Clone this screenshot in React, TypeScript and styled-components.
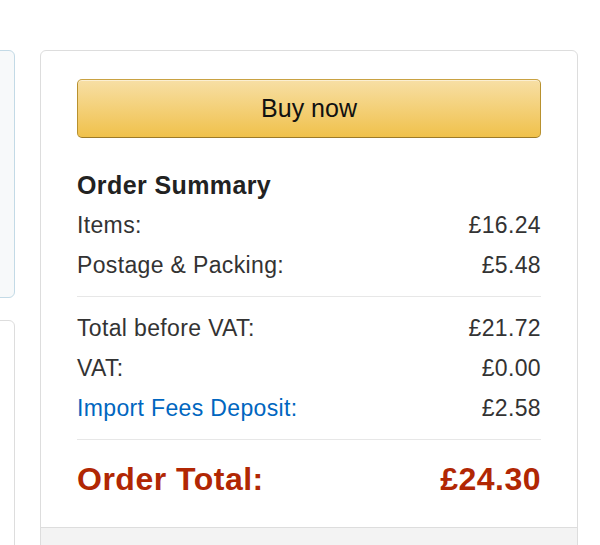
import styled, { createGlobalStyle } from "styled-components";

const GlobalStyle = createGlobalStyle`
  html, body {
    margin: 0;
    padding: 0;
    height: 100%;
    overflow: hidden;
    background: #ffffff;
    font-family: "Liberation Sans", Arial, sans-serif;
    color: #333333;
  }
`;

type Line = { label: string; value: string; link?: boolean };

const summary: Line[] = [
  { label: "Items:", value: "£16.24" },
  { label: "Postage & Packing:", value: "£5.48" },
];

const totals: Line[] = [
  { label: "Total before VAT:", value: "£21.72" },
  { label: "VAT:", value: "£0.00" },
  { label: "Import Fees Deposit:", value: "£2.58", link: true },
];

export default function App() {
  return (
    <>
      <GlobalStyle />
      <Page>
        <LeftColumn>
          <InfoCard />
          <PlainCard />
        </LeftColumn>
        <OrderCard>
          <Body>
            <BuyButton type="button">Buy now</BuyButton>
            <Heading>Order Summary</Heading>
            {summary.map((l) => (
              <Row key={l.label}>
                <Label $link={l.link}>{l.label}</Label>
                <Value>{l.value}</Value>
              </Row>
            ))}
            <Divider />
            {totals.map((l) => (
              <Row key={l.label}>
                <Label $link={l.link}>{l.label}</Label>
                <Value>{l.value}</Value>
              </Row>
            ))}
            <Divider />
            <TotalRow>
              <span>Order Total:</span>
              <span>£24.30</span>
            </TotalRow>
          </Body>
          <CardFooter />
        </OrderCard>
      </Page>
    </>
  );
}

const Page = styled.main`
  display: flex;
  align-items: flex-start;
  gap: 25px;
  padding-top: 50px;
`;

const LeftColumn = styled.div`
  width: 200px;
  margin-left: -185px;
  display: flex;
  flex-direction: column;
  gap: 22px;
  flex-shrink: 0;
`;

const InfoCard = styled.div`
  height: 246px;
  background: #f7f9fa;
  border: 1px solid #c3dae6;
  border-radius: 6px;
`;

const PlainCard = styled.div`
  height: 300px;
  background: #ffffff;
  border: 1px solid #dddddd;
  border-radius: 6px;
`;

const OrderCard = styled.section`
  width: 536px;
  flex-shrink: 0;
  border: 1px solid #dddddd;
  border-radius: 6px;
  background: #ffffff;
  overflow: hidden;
`;

const Body = styled.div`
  display: flex;
  flex-direction: column;
  padding: 28px 36px 28px;
`;

const BuyButton = styled.button`
  height: 59px;
  width: 100%;
  border: 1px solid;
  border-color: #c9a243 #b8912e #9c7a28;
  border-radius: 5px;
  background: linear-gradient(to bottom, #f7dfa5, #f0c14b);
  box-shadow: inset 0 1px 0 rgba(255, 255, 255, 0.5);
  font-family: "Liberation Sans", Arial, sans-serif;
  font-size: 25px;
  color: #111111;
  cursor: pointer;
  margin-bottom: 32px;
`;

const Heading = styled.h3`
  margin: 0 0 5px;
  font-size: 25px;
  line-height: 30px;
  font-weight: 700;
  letter-spacing: 0.4px;
  color: #222222;
`;

const Row = styled.div`
  display: flex;
  justify-content: space-between;
  font-size: 23px;
  line-height: 40px;
  letter-spacing: 0.35px;
`;

const Label = styled.span<{ $link?: boolean }>`
  color: ${(p) => (p.$link ? "#0066c0" : "#333333")};
`;

const Value = styled.span`
  color: #333333;
`;

const Divider = styled.hr`
  border: none;
  border-top: 1px solid #e7e7e7;
  margin: 11px 0;
`;

const TotalRow = styled.div`
  display: flex;
  justify-content: space-between;
  margin-top: 8px;
  font-size: 32px;
  line-height: 40px;
  font-weight: 700;
  letter-spacing: 0.5px;
  color: #b12704;
`;

const CardFooter = styled.div`
  height: 40px;
  background: #f3f3f3;
  border-top: 1px solid #dddddd;
`;
